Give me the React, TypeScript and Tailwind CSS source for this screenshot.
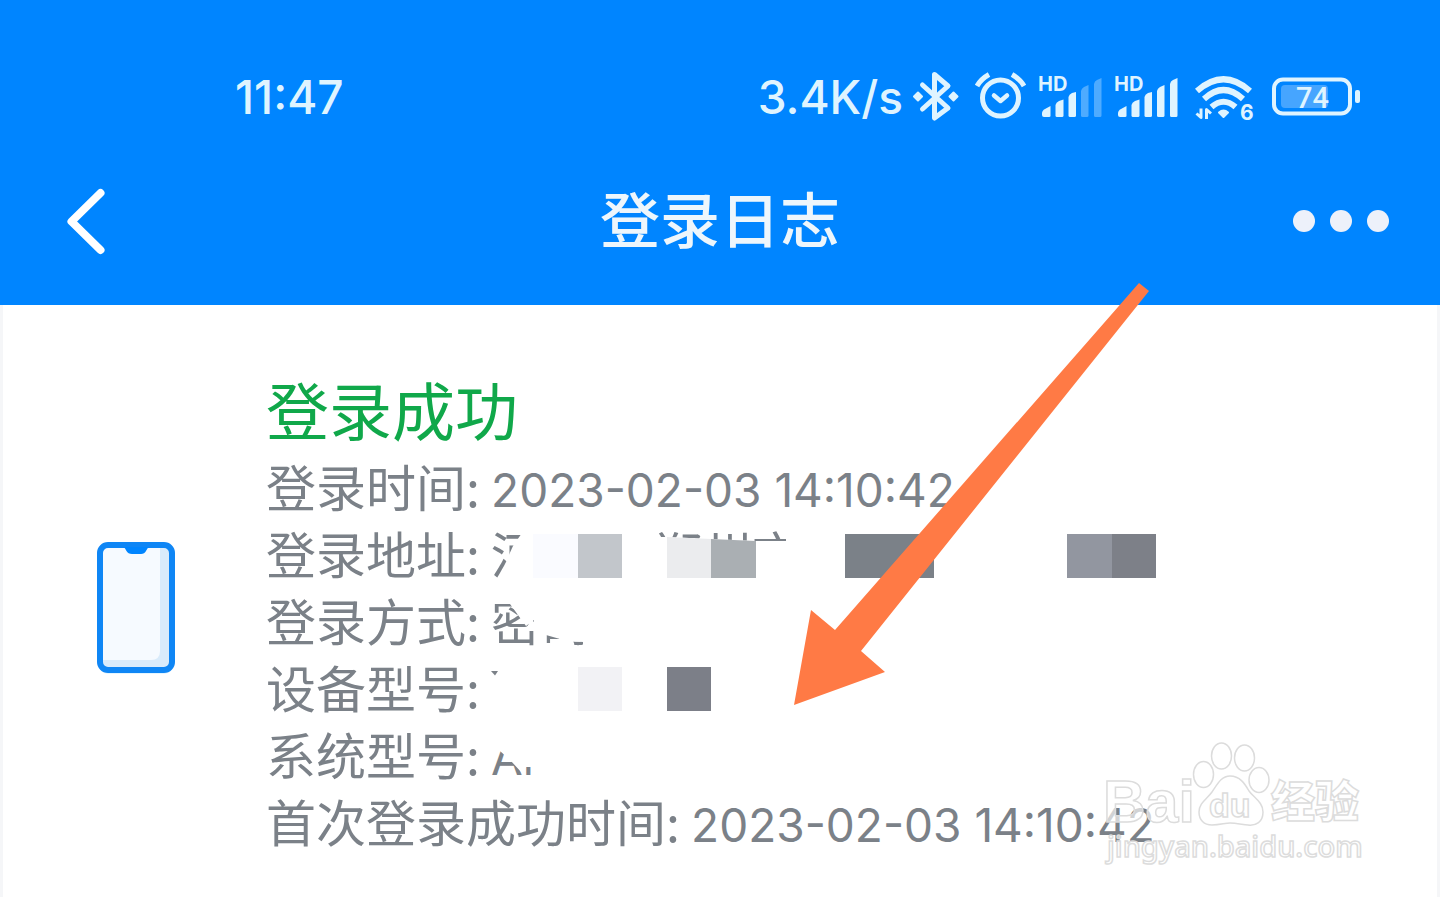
const logs = [
  { label: "登录时间", value: "2023-02-03 14:10:42" },
  { label: "登录地址", value: ["河", "郑州市"] },
  { label: "登录方式", value: ["密码"] },
  { label: "设备型号", value: "" },
  { label: "系统型号", value: "An" },
  { label: "首次登录成功时间", value: "2023-02-03 14:10:42" },
];

// censor blocks painted over the private values
const blocks = [
  { x: 533, y: 534, w: 45, h: 44, fill: "#fafbff" },
  { x: 578, y: 534, w: 44, h: 44, fill: "#c2c6cb" },
  { x: 845, y: 534, w: 89, h: 44, fill: "#7b8188" },
  { x: 1067, y: 534, w: 45, h: 44, fill: "#9296a0" },
  { x: 1112, y: 534, w: 44, h: 44, fill: "#7d8088" },
  { x: 578, y: 667, w: 44, h: 44, fill: "#f2f2f5" },
  { x: 667, y: 667, w: 44, h: 44, fill: "#7c7f88" },
];

function Bluetooth() {
  return (
    <svg className="h-[54px] w-[50px]" viewBox="911 70 50 54" fill="none">
      <path
        d="M922.500 85 L948 108 L934.500 118 V74.500 L948 86 L922.500 109"
        stroke="#dff4ff"
        strokeWidth="5"
        strokeLinecap="round"
        strokeLinejoin="round"
      />
      <path
        d="M918 92.500 l4 4 -4 4 -4 -4z M953.500 92.500 l4 4 -4 4 -4 -4z"
        fill="#dff4ff"
        stroke="#dff4ff"
        strokeWidth="2"
        strokeLinejoin="round"
      />
    </svg>
  );
}

function Alarm() {
  return (
    <svg
      className="h-[54px] w-[54px]"
      viewBox="973 70 54 54"
      fill="none"
      stroke="#dff4ff"
    >
      <circle cx="1000.500" cy="98" r="18" strokeWidth="5" />
      <path
        d="M994 95.500 L1000.500 101 L1007 95.500"
        strokeWidth="4.500"
        strokeLinecap="round"
        strokeLinejoin="round"
      />
      <path d="M977 86 Q981 79 989 74.500 M1012 74.500 Q1020 79 1024 86" strokeWidth="5" />
    </svg>
  );
}

function Signal({ level }: { level: number }) {
  const bars = [
    "M3 43.500 Q3 40.500 6 39 L11.500 36 V46 Q11.500 47 10 47 H5 Q3 47 3 45z",
    "M16.500 35 Q17 32.500 20 31 L24.500 29.500 V45.500 Q24.500 47 23 47 H18 Q16.500 47 16.500 45.500z",
    "M29.500 27 Q30 24.500 33 23 L37 22 V45.500 Q37 47 35.500 47 H31 Q29.500 47 29.500 45.500z",
    "M42 21 Q42.500 18.500 45 17 L49.500 15 V45.500 Q49.500 47 48 47 H43.500 Q42 47 42 45.500z",
    "M55 14 Q55.500 11 58 10 L62.500 8 V45.500 Q62.500 47 61 47 H56.500 Q55 47 55 45.500z",
  ];
  return (
    <svg className="h-[54px] w-16" viewBox="0 0 64 54" fill="#dff4ff">
      <text x="-1" y="21" fontSize="20" fontWeight="700" fontFamily="Inter, sans-serif">
        HD
      </text>
      {bars.map((d, i) => (
        <path key={i} d={d} opacity={i < level ? 1 : 0.35} />
      ))}
    </svg>
  );
}

function Wifi() {
  return (
    <svg
      className="h-[54px] w-[66px]"
      viewBox="1191 70 66 54"
      fill="none"
      stroke="#dff4ff"
      strokeWidth="6"
      strokeLinejoin="round"
    >
      <path d="M1197 91 Q1223.500 67.500 1250 91" />
      <path d="M1204 99 Q1223.500 81 1243 99" />
      <path d="M1211.500 107 Q1223.500 96.500 1235.500 107" />
      <path
        d="M1223.500 117 l-4.500 -4.500 q4.500 -4 9 0z"
        fill="#dff4ff"
        strokeWidth="2"
      />
      <path
        d="M1201 108.500 V117.500 l-4.500 -4 M1206.500 119 V109.500 l4.500 4"
        strokeWidth="3"
      />
      <text
        x="1240"
        y="120"
        fill="#dff4ff"
        stroke="none"
        fontSize="21"
        fontWeight="700"
        fontFamily="Inter, sans-serif"
      >
        6
      </text>
    </svg>
  );
}

function Battery() {
  return (
    <svg className="h-[54px] w-[91px]" viewBox="1269 70 91 54" fill="none">
      <rect x="1281" y="85" width="47" height="23" rx="4" fill="#46a5ff" />
      <rect
        x="1274"
        y="79.500"
        width="76"
        height="34"
        rx="9"
        stroke="#dff4ff"
        strokeWidth="4"
      />
      <rect x="1355" y="90" width="5" height="13" rx="2" fill="#dff4ff" />
      <text
        x="1296"
        y="108"
        fill="#dff4ff"
        fontSize="29"
        fontWeight="500"
        fontFamily="Roboto, sans-serif"
      >
        74
      </text>
    </svg>
  );
}

function Phone() {
  return (
    <svg className="h-[140px] w-[90px]" viewBox="-1 0 90 140" fill="none">
      <rect x="7" y="8" width="76" height="129" rx="11" fill="#e3f5ff" />
      <rect x="9" y="8" width="72" height="125" rx="8" fill="#d9ebfb" />
      <path d="M9 8 H69 V114 Q69 123 60 123 H9z" fill="#f6faff" />
      <rect x="9" y="8" width="72" height="125" rx="8" stroke="#0f86f5" strokeWidth="6" />
      <path
        d="M32 10 Q34 10.500 35.500 14 Q37 17 41 17 H50 Q53.500 17 55 14 Q56.500 10.500 58.500 10z"
        fill="#0085ff"
      />
    </svg>
  );
}

function Marks() {
  return (
    <svg
      className="pointer-events-none absolute left-0 top-0 h-[897px] w-[1440px]"
      viewBox="0 0 1440 897"
      aria-hidden="true"
    >
      <g fill="#ffffff">
        <path d="M524 530 L513 546 L508 557 L505 590 H560 V530z" />
        <path d="M645 537 H667 L756 541 H786 V526 H806 V590 H645z" />
        <path d="M488 594 H606 V652 H583 V642 L569 641 V652 H560 V639 L546 635 V652 H534 V620 L526 626 L510 604 H488z" />
        <path d="M488 728 H560 V767 H526 L522 773 L511 761 L500 751 L488 751z" />
        <path d="M532 760 H560 V784 H532z" />
      </g>
      <path d="M491 671 H498 L495 675.500z" fill="#7b8188" />
      <path d="M667 537 L711 539 V578 H667z" fill="#ebecee" />
      <path d="M711 539 L756 541 V578 H711z" fill="#aaafb3" />
      {blocks.map((b, i) => (
        <rect key={i} x={b.x} y={b.y} width={b.w} height={b.h} fill={b.fill} />
      ))}
      <path
        d="M1139 283 L1149 291 L861 651 L885 672 L794 705 L811 610 L835 630z"
        fill="#ff7a45"
      />
    </svg>
  );
}

function Watermark() {
  return (
    <svg
      className="pointer-events-none absolute left-[1096px] top-[734px] h-[140px] w-[280px]"
      viewBox="1096 734 280 140"
      fill="#ffffff"
      fillOpacity="0.65"
      stroke="#dcdcdc"
      strokeWidth="1.500"
    >
      <text x="1103" y="822" fontSize="59" fontWeight="700" fontFamily="'Liberation Sans', Arial, sans-serif">
        Bai
      </text>
      <ellipse cx="1203.500" cy="774.500" rx="10" ry="13" />
      <ellipse cx="1221.500" cy="756" rx="10" ry="13" />
      <ellipse cx="1244.500" cy="758" rx="10" ry="13" />
      <ellipse cx="1259" cy="780" rx="10" ry="12.500" />
      <path d="M1230 776 C1240 776 1245 784 1249 791 C1254 798 1263 802 1263 812 C1263 822 1256 826 1248 825 C1240 824 1235 823 1230 823 C1225 823 1220 825 1212 825 C1204 825 1199 820 1199 812 C1199 803 1207 799 1212 792 C1217 785 1221 776 1230 776z" />
      <text x="1209" y="817" fontSize="34" fontWeight="700" fontFamily="'Liberation Sans', Arial, sans-serif">
        du
      </text>
      <text x="1271" y="818" fontSize="44" fontWeight="900" fontFamily="'Noto Sans CJK SC', sans-serif">
        经验
      </text>
      <text x="1107" y="857" fontSize="29" fontWeight="500" fontFamily="'Noto Sans', sans-serif">
        jingyan.baidu.com
      </text>
    </svg>
  );
}

function App() {
  return (
    <div className="relative min-h-screen overflow-hidden bg-[#f5f6f8] font-['Noto_Sans_CJK_SC',sans-serif]">
      <header className="bg-[#0085ff] pb-[34px] pt-[70px]">
        <div className="flex items-center justify-between pl-[235px] pr-20 font-['Inter',sans-serif] text-[46px] font-medium leading-[54px] text-[#dff4ff]">
          <time>11:47</time>
          <div className="flex items-center gap-3">
            <span className="-mr-1">3.4K/s</span>
            <Bluetooth />
            <Alarm />
            <Signal level={3} />
            <Signal level={5} />
            <Wifi />
            <Battery />
          </div>
        </div>
        <div className="mt-[47px] grid grid-cols-[1fr_auto_1fr] items-center px-12">
          <button aria-label="返回" className="cursor-pointer justify-self-start">
            <svg className="h-20 w-[72px]" viewBox="48 180 72 80" fill="none">
              <path
                d="M100.500 192 L71.500 220.500 L100.500 249"
                stroke="#ffffff"
                strokeWidth="8"
                strokeLinecap="round"
                strokeLinejoin="round"
              />
            </svg>
          </button>
          <h1 className="pb-2 text-[60px] font-medium leading-[92px] text-[#edf6fc]">
            登录日志
          </h1>
          <button aria-label="更多" className="cursor-pointer justify-self-end">
            <svg className="h-10 w-[104px]" viewBox="1288 201 104 40" fill="#edf1fa">
              <circle cx="1304" cy="221" r="11" />
              <circle cx="1341" cy="221" r="11" />
              <circle cx="1378" cy="221" r="11" />
            </svg>
          </button>
        </div>
      </header>

      <main className="mx-[3px] flex min-h-[592px] items-start bg-white pt-[55px]">
        <div className="flex items-center">
          <div className="flex w-[263px] shrink-0 justify-center">
            <Phone />
          </div>
          <section>
            <h2 className="pt-1 text-[63px] leading-[88px] text-[#10a84a]">登录成功</h2>
            <dl className="text-[50px] leading-[67px] text-[#7b8188]">
              {logs.map((log) => (
                <div key={log.label} className="flex h-[67px] items-baseline whitespace-pre">
                  <dt>{log.label}: </dt>
                  {Array.isArray(log.value) ? (
                    <dd className="flex gap-[111px]">
                      {log.value.map((part) => (
                        <span key={part}>{part}</span>
                      ))}
                    </dd>
                  ) : (
                    <dd className="font-['Inter',sans-serif] text-[46px]">{log.value}</dd>
                  )}
                </div>
              ))}
            </dl>
          </section>
        </div>
      </main>
      <Marks />
      <Watermark />
    </div>
  );
}

export default App;
